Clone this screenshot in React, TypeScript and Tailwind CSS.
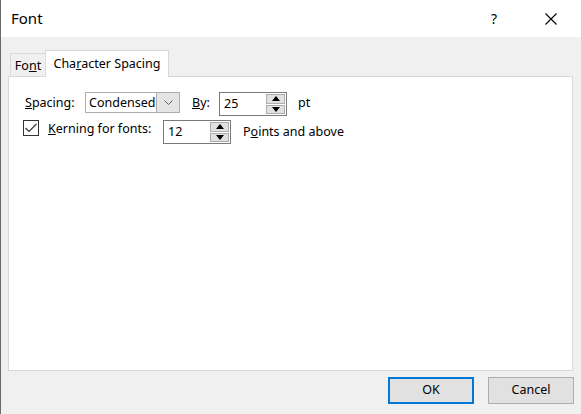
import React from "react";

function SpinBox({ value }: { value: string }) {
  return (
    <div className="flex h-[24px] w-[68px] border border-[#7a7a7a] bg-white">
      <div className="flex-1 pl-[4px] leading-[22px]">{value}</div>
      <div className="flex w-[20px] flex-col gap-[1px] py-[1px] pr-[1px]">
        <div className="flex flex-1 items-center justify-center border border-[#adadad] bg-[#e1e1e1]">
          <svg width="8" height="5" viewBox="0 0 8 5">
            <polygon points="0,5 8,5 4,0" fill="#000" />
          </svg>
        </div>
        <div className="flex flex-1 items-center justify-center border border-[#adadad] bg-[#e1e1e1]">
          <svg width="8" height="5" viewBox="0 0 8 5">
            <polygon points="0,0 8,0 4,5" fill="#000" />
          </svg>
        </div>
      </div>
    </div>
  );
}

export default function App() {
  return (
    <div
      className="flex h-[414px] w-[581px] flex-col border-l border-[#6a6a6a] text-[12.5px] text-black"
      style={{ fontFamily: '"Noto Sans", "Open Sans", sans-serif' }}
    >
      {/* Title bar */}
      <div className="flex h-[37px] shrink-0 items-center bg-white">
        <div className="pl-[10px] text-[15px]">Font</div>
        <div className="ml-auto flex items-center gap-[11px] pr-[7px]">
          <div className="flex w-[46px] justify-center text-[14px]">?</div>
          <div className="flex w-[46px] justify-center">
            <svg width="12" height="12" viewBox="0 0 12 12">
              <path d="M0.5 0.5 L11.5 11.5 M11.5 0.5 L0.5 11.5" stroke="#000" strokeWidth="1.1" />
            </svg>
          </div>
        </div>
      </div>

      {/* Body */}
      <div className="flex flex-1 flex-col bg-[#f0f0f0] pl-[7px] pr-[8px] pt-[13px]">
        {/* Tabs */}
        <div className="flex items-end pl-[2px]">
          <div className="flex h-[23px] w-[35px] items-center justify-center border-l border-t border-[#d9d9d9] bg-[#f0f0f0] pt-[3px]">
            Fo<u>n</u>t
          </div>
          <div className="relative z-10 -mb-px flex h-[27px] w-[124px] items-center justify-center border-x border-t border-[#d9d9d9] bg-white">
            Cha<u>r</u>acter Spacing
          </div>
        </div>

        {/* Panel */}
        <div className="flex flex-1 flex-col border border-[#d9d9d9] bg-white pl-[14px] pt-[15px]">
          {/* Row 1 */}
          <div className="flex h-[24px] items-center">
            <div className="w-[62px] pl-[2px] pb-[1px]">
              <u>S</u>pacing:
            </div>
            <div className="mb-[3px] flex h-[21px] w-[95px] border border-[#adadad] bg-white">
              <div className="flex-1 pl-[3px] leading-[19px]">Condensed</div>
              <div className="flex w-[23px] items-center justify-center border-l border-[#adadad] bg-[#e5e5e5]">
                <svg width="9" height="5" viewBox="0 0 9 5">
                  <path d="M0.5 0.5 L4.5 4.5 L8.5 0.5" stroke="#606060" strokeWidth="1" fill="none" />
                </svg>
              </div>
            </div>
            <div className="ml-[12px] w-[27px] pb-[1px]">
              <u>B</u>y:
            </div>
            <SpinBox value="25" />
            <div className="ml-[11px] pb-[1px]">pt</div>
          </div>

          {/* Row 2 */}
          <div className="mt-[4px] flex h-[24px] items-start">
            <div className="flex h-[16px] w-[16px] items-center justify-center border border-[#333]">
              <svg width="12" height="10" viewBox="0 0 12 10">
                <path d="M0.5 5 L4 8.5 L11.5 1" stroke="#333" strokeWidth="1.1" fill="none" />
              </svg>
            </div>
            <div className="ml-[9px] w-[115px] leading-[17px]">
              <u>K</u>erning for fonts:
            </div>
            <SpinBox value="12" />
            <div className="ml-[12px] self-center">
              P<u>o</u>ints and above
            </div>
          </div>
        </div>

        {/* Buttons */}
        <div className="flex h-[43px] shrink-0 justify-end gap-[14px] pt-[6px]">
          <div className="flex h-[27px] w-[86px] items-center justify-center border-2 border-[#0078d7] bg-[#e1e1e1]">
            OK
          </div>
          <div className="-mr-px flex h-[27px] w-[86px] items-center justify-center border border-[#adadad] bg-[#e1e1e1]">
            Cancel
          </div>
        </div>
      </div>
    </div>
  );
}
